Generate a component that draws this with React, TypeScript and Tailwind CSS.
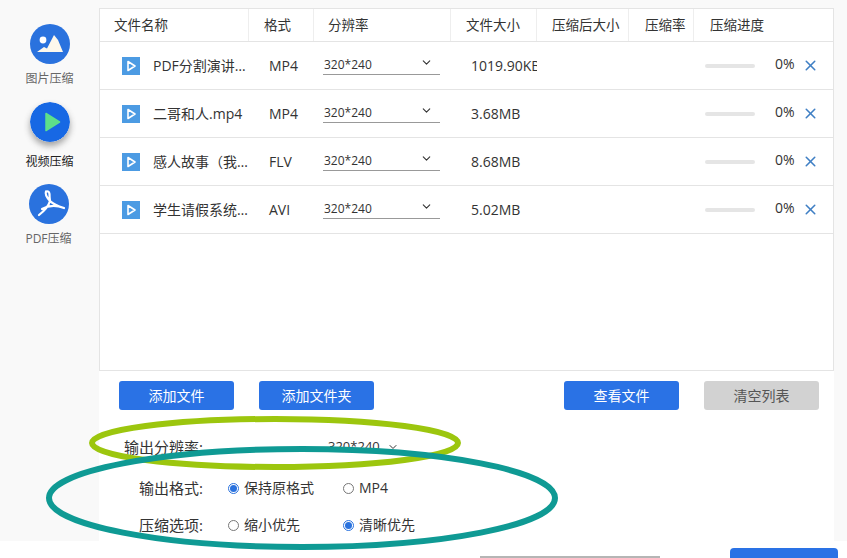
import { ChevronDown, X } from "lucide-react";

const files = [
    { name: "PDF分割演讲稿件内容.mp4", format: "MP4", size: "1019.90KB" },
    { name: "二哥和人.mp4", format: "MP4", size: "3.68MB" },
    { name: "感人故事（我的朋友）.flv", format: "FLV", size: "8.68MB" },
    { name: "学生请假系统演示视频.avi", format: "AVI", size: "5.02MB" },
];

const headers = [
    { label: "文件名称", className: "w-[149px] pl-[14px]" },
    { label: "格式", className: "w-[65px] pl-[15px]" },
    { label: "分辨率", className: "w-[137px] pl-[14px]" },
    { label: "文件大小", className: "w-[86px] pl-[15px]" },
    { label: "压缩后大小", className: "w-[92px] pl-[15px]" },
    { label: "压缩率", className: "w-[65px] pl-[16px]" },
    { label: "压缩进度", className: "flex-1 pl-[16px]" },
];

function ImageIcon() {
    return (
        <svg viewBox="0 0 40 40" className="w-10 h-10">
            <circle cx="20" cy="20" r="20" fill="#2a72de" />
            <circle cx="13" cy="16" r="3.4" fill="#fff" />
            <path d="M7 28 L14 23 L17 24.5 L24 11 L28 16 L33 28 Z" fill="#fdf8ec" />
        </svg>
    );
}

function VideoIcon() {
    return (
        <svg viewBox="0 0 40 40" className="w-10 h-10 rounded-full shadow-[0_4px_6px_rgba(60,60,60,0.45)]">
            <circle cx="20" cy="20" r="20" fill="#1768e4" />
            <path d="M16 11.5 L29.5 20 L16 28.5 Z" fill="#5ee08a" stroke="#5ee08a" strokeWidth="1.5" strokeLinejoin="round" />
        </svg>
    );
}

function PdfIcon() {
    return (
        <svg viewBox="0 0 40 40" className="w-10 h-10">
            <circle cx="20" cy="20" r="20" fill="#2a72de" />
            <path
                d="M17 7.5 Q20 6.5 20.5 10 Q20.5 13 21 17 Q19 24 10 31 M17 7.5 Q15.5 11 21 17 Q25 21 35 24 M13 25 Q23 19.5 35 24"
                fill="none"
                stroke="#fff"
                strokeWidth="2.2"
                strokeLinecap="round"
                strokeLinejoin="round"
            />
        </svg>
    );
}

function FileIcon() {
    return (
        <svg viewBox="0 0 18 18" className="w-[18px] h-[18px] shrink-0">
            <rect width="18" height="18" fill="#4c9be3" />
            <path d="M6 4.5 L13 9 L6 13.5 Z" fill="none" stroke="#fff" strokeWidth="1.6" strokeLinejoin="round" />
        </svg>
    );
}

function NavItem({ icon, label, className }: { icon: React.ReactNode; label: string; className: string }) {
    return (
        <div className={`flex flex-col items-center ${className}`}>
            {icon}
            <span className="text-xs leading-4">{label}</span>
        </div>
    );
}

function Radio({ label, checked, className }: { label: string; checked?: boolean; className: string }) {
    return (
        <div className={`flex items-center gap-[5px] text-sm text-[#333] ${className}`}>
            <span className={`w-[11px] h-[11px] rounded-full border flex items-center justify-center bg-white ${checked ? "border-[#2a72de]" : "border-[#777]"}`}>
                {checked && <span className="w-[7px] h-[7px] rounded-full bg-[#2a72de]" />}
            </span>
            {label}
        </div>
    );
}

function ActionButton({ label, gray }: { label: string; gray?: boolean }) {
    return (
        <button className={`w-[115px] h-[29px] rounded-[3px] text-sm ${gray ? "bg-[#d2d2d2] text-[#555]" : "bg-[#2a72e5] text-white"}`}>
            {label}
        </button>
    );
}

export default function App() {
    return (
        <div className="relative w-[847px] h-[558px] overflow-hidden bg-white flex flex-col text-[#333] font-['Open_Sans','Noto_Sans_CJK_SC',sans-serif]">
            <div className="h-[541px] flex bg-[#f9f9f9] shrink-0">
                {/* Sidebar */}
                <aside className="w-[99px] pt-[24px] shrink-0">
                    <NavItem icon={<ImageIcon />} label="图片压缩" className="text-[#666] [&>span]:mt-[7px]" />
                    <NavItem icon={<VideoIcon />} label="视频压缩" className="mt-[15px] text-[#222] [&>span]:mt-[12px]" />
                    <NavItem icon={<PdfIcon />} label="PDF压缩" className="mt-[14px] text-[#666] -translate-x-px [&>span]:mt-[7px]" />
                </aside>

                <main className="w-[735px] pt-2 flex flex-col">
                    {/* File table */}
                    <div className="h-[363px] bg-white border border-[#e4e4e4] shrink-0">
                        <div className="h-[33px] flex border-b border-[#e4e4e4] text-[13.5px]">
                            {headers.map((h, i) => (
                                <div key={h.label} className={`flex items-center whitespace-nowrap ${h.className} ${i < headers.length - 1 ? "border-r border-[#eeeeee]" : ""}`}>
                                    {h.label}
                                </div>
                            ))}
                        </div>
                        {files.map((f) => (
                            <div key={f.name} className="h-[48px] flex items-center border-b border-[#e4e4e4] text-sm first:mt-[1px]">
                                <div className="w-[149px] pl-[22px] flex items-center gap-[13px]">
                                    <FileIcon />
                                    <span className="w-[97px] shrink-0 truncate text-sm">{f.name}</span>
                                </div>
                                <div className="w-[65px] pl-[20px]">{f.format}</div>
                                <div className="w-[137px] pl-[9px]">
                                    <div className="w-[117px] h-[22px] -mt-[3px] flex items-center justify-between border-b border-[#999] pl-px pr-[7px] text-xs">
                                        <span className="mt-[2px]">320*240</span>
                                        <ChevronDown size={13} strokeWidth={2} className="-mt-[3px]" />
                                    </div>
                                </div>
                                <div className="w-[86px] pl-[20px] overflow-hidden whitespace-nowrap">{f.size}</div>
                                <div className="w-[157px]" />
                                <div className="flex-1 pl-[11px] flex items-center">
                                    <div className="w-[50px] h-[4px] rounded-full bg-[#e5e5e5]" />
                                    <span className="ml-[20px] -mt-[3px]">0%</span>
                                    <X size={17} strokeWidth={2.2} className="ml-[7px] text-[#3f7fc4]" />
                                </div>
                            </div>
                        ))}
                    </div>

                    {/* Bottom controls */}
                    <div className="flex-1 bg-white pl-[20px] pr-[15px] pt-[10px]">
                        <div className="flex items-center">
                            <ActionButton label="添加文件" />
                            <div className="ml-[25px]"><ActionButton label="添加文件夹" /></div>
                            <div className="ml-auto"><ActionButton label="查看文件" /></div>
                            <div className="ml-[25px]"><ActionButton label="清空列表" gray /></div>
                        </div>
                        <div className="mt-[27px] flex items-center h-[20px] pl-[5px]">
                            <span className="w-[204px] text-[15px]">输出分辨率:</span>
                            <span className="text-[13px]">320*240</span>
                            <ChevronDown size={12} className="ml-[7px]" />
                        </div>
                        <div className="mt-[21px] flex items-center h-[20px] pl-[20px]">
                            <span className="w-[89px] text-[15px]">输出格式:</span>
                            <Radio label="保持原格式" checked className="w-[115px]" />
                            <Radio label="MP4" className="" />
                        </div>
                        <div className="mt-[17px] flex items-center h-[20px] pl-[20px]">
                            <span className="w-[89px] text-[15px]">压缩选项:</span>
                            <Radio label="缩小优先" className="w-[115px]" />
                            <Radio label="清晰优先" checked className="" />
                        </div>
                    </div>
                </main>
            </div>

            {/* Footer */}
            <div className="flex-1 flex items-start pl-[480px] pr-[9px] pt-[7px]">
                <div className="w-[180px] h-[3px] mt-[8px] bg-[#b5b5b5]" />
                <div className="ml-auto w-[108px] h-[30px] rounded-[4px] bg-[#2a72e5]" />
            </div>

            {/* Hand-drawn annotations */}
            <svg className="absolute inset-0 pointer-events-none" width="847" height="558" viewBox="0 0 847 558" fill="none">
                <ellipse cx="275" cy="443" rx="183" ry="24" stroke="#9cc60e" strokeWidth="6" />
                <ellipse cx="302" cy="498" rx="253" ry="49" stroke="#0f9a94" strokeWidth="6" />
            </svg>
        </div>
    );
}
